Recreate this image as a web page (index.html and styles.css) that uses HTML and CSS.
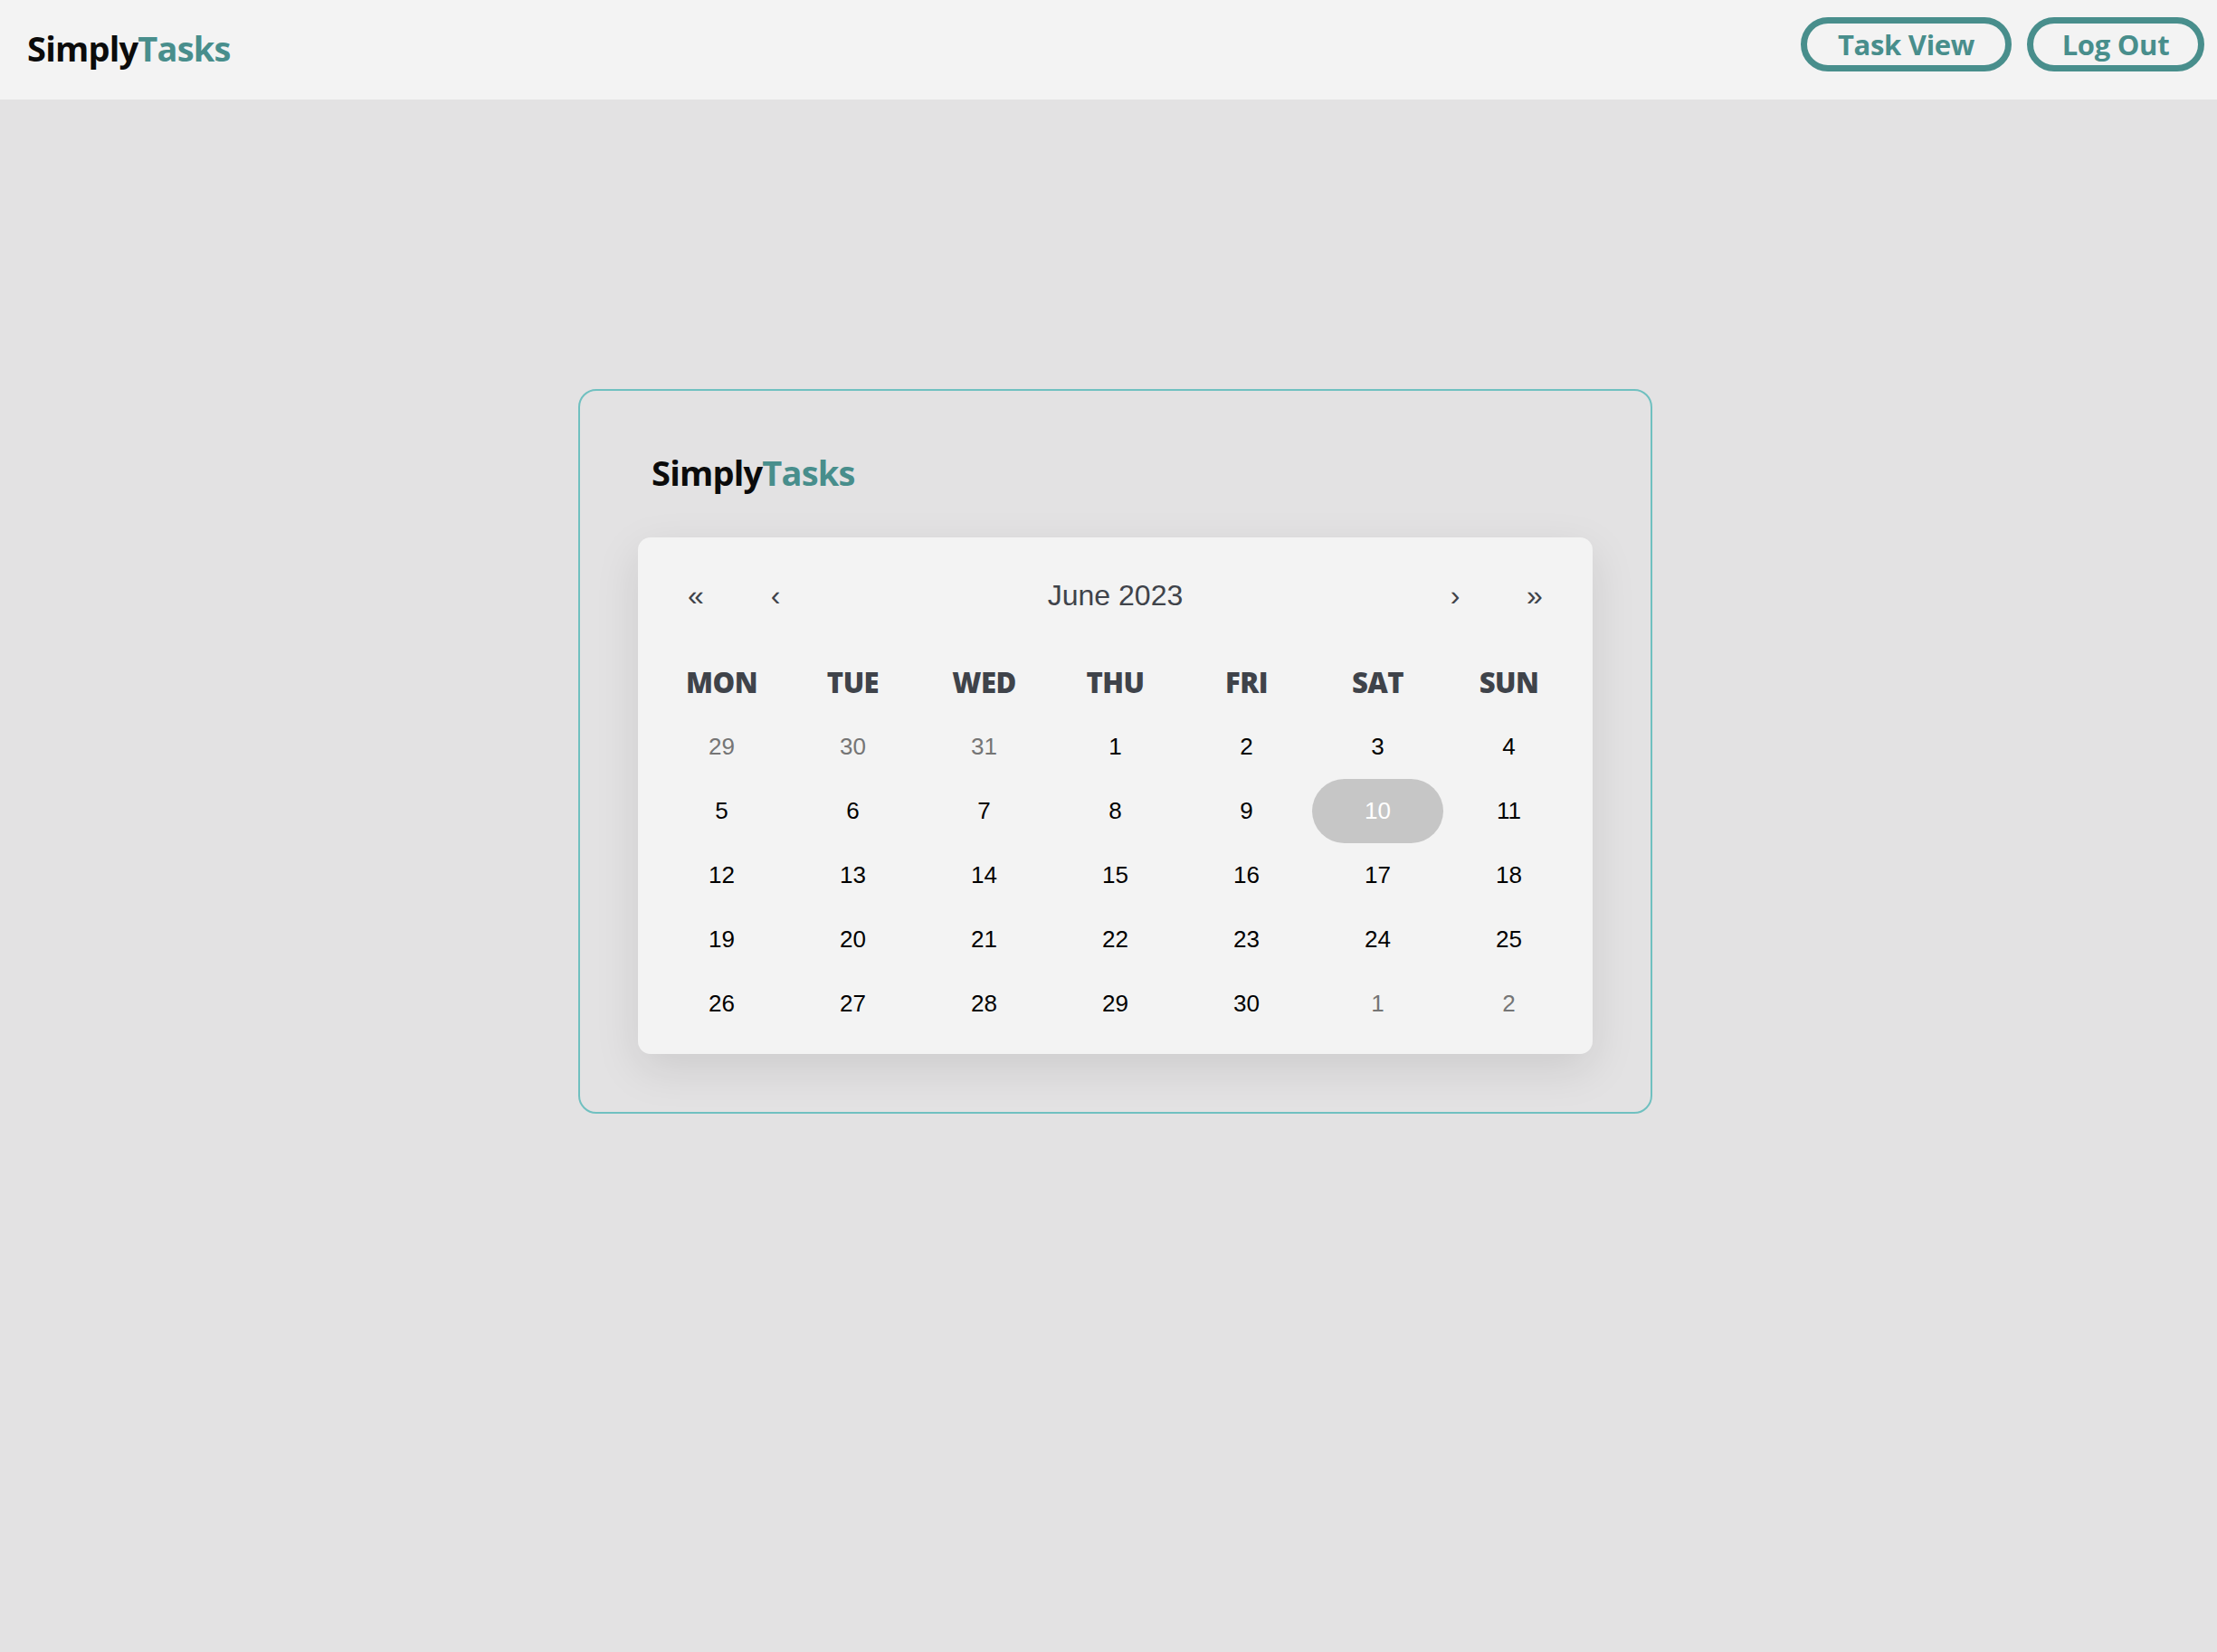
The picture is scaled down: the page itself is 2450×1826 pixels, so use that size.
FILE: index.html
```html
<!DOCTYPE html>
<html lang="en">
<head>
<meta charset="utf-8">
<title>SimplyTasks</title>
<link rel="stylesheet" href="styles.css">
</head>
<body>
<header class="topbar">
  <div class="logo logo-top"><span class="logo-a">Simply</span><span class="logo-b">Tasks</span></div>
  <nav class="actions">
    <button class="pill-btn btn-task">Task View</button>
    <button class="pill-btn btn-logout">Log Out</button>
  </nav>
</header>
<main class="main">
  <section class="card">
    <div class="logo logo-card"><span class="logo-a">Simply</span><span class="logo-b">Tasks</span></div>
    <div class="calendar">
      <div class="cal-nav">
        <button class="nav-btn">«</button>
        <button class="nav-btn">‹</button>
        <div class="nav-label">June 2023</div>
        <button class="nav-btn">›</button>
        <button class="nav-btn">»</button>
      </div>
      <div class="weekdays">
        <div class="wd">Mon</div><div class="wd">Tue</div><div class="wd">Wed</div><div class="wd">Thu</div><div class="wd">Fri</div><div class="wd">Sat</div><div class="wd">Sun</div>
      </div>
      <div class="days">
        <div class="day other">29</div><div class="day other">30</div><div class="day other">31</div><div class="day">1</div><div class="day">2</div><div class="day">3</div><div class="day">4</div>
        <div class="day">5</div><div class="day">6</div><div class="day">7</div><div class="day">8</div><div class="day">9</div><div class="day active">10</div><div class="day">11</div>
        <div class="day">12</div><div class="day">13</div><div class="day">14</div><div class="day">15</div><div class="day">16</div><div class="day">17</div><div class="day">18</div>
        <div class="day">19</div><div class="day">20</div><div class="day">21</div><div class="day">22</div><div class="day">23</div><div class="day">24</div><div class="day">25</div>
        <div class="day">26</div><div class="day">27</div><div class="day">28</div><div class="day">29</div><div class="day">30</div><div class="day other">1</div><div class="day other">2</div>
      </div>
    </div>
  </section>
</main>
</body>
</html>
```
FILE: styles.css
```css
* { box-sizing: border-box; }
html, body { margin: 0; padding: 0; }
body {
  background: #e3e2e3;
  min-height: 1826px;
  font-family: "Liberation Sans", Arial, sans-serif;
}
.topbar {
  height: 110px;
  background: #f3f3f3;
  display: flex;
  align-items: center;
  justify-content: space-between;
  padding: 0 14px 0 30px;
}
.logo {
  font-family: "Open Sans", "Noto Sans", sans-serif;
  font-weight: 700;
  font-size: 38px;
  line-height: 52px;
  letter-spacing: -0.8px;
}
.logo-a { color: #0b0b0b; }
.logo-b { color: #488e8c; }
.logo-top { margin-bottom: 4px; }
.actions {
  display: flex;
  gap: 17px;
  margin-bottom: 12px;
}
.pill-btn {
  height: 60px;
  padding: 0;
  border: 7px solid #488e8c;
  border-radius: 30px;
  background: transparent;
  color: #488e8c;
  font-family: "Open Sans", "Noto Sans", sans-serif;
  font-weight: 700;
  font-size: 31px;
  line-height: 1;
  letter-spacing: -0.3px;
  text-align: center;
  cursor: pointer;
}
.btn-task { width: 233px; }
.btn-logout { width: 196px; }
.main {
  display: flex;
  justify-content: center;
  padding: 320px 0 0 15px;
}
.card {
  width: 1187px;
  border: 2px solid #70c0c0;
  border-radius: 20px;
  padding: 64px;
}
.logo-card {
  margin-bottom: 46px;
  padding-left: 15px;
}
.calendar {
  background: #f3f3f3;
  border-radius: 14px;
  padding: 20px;
  box-shadow: 0 16px 50px rgba(0, 0, 0, 0.10);
}
.cal-nav {
  display: flex;
  height: 88px;
  margin-bottom: 16px;
}
.nav-btn {
  width: 88px;
  border: 0;
  background: transparent;
  color: #3f434a;
  font-family: "Liberation Sans", Arial, sans-serif;
  font-size: 32px;
  padding: 0;
}
.nav-label {
  flex: 1;
  display: flex;
  align-items: center;
  justify-content: center;
  color: #3f434a;
  font-size: 32px;
}
.weekdays {
  display: grid;
  grid-template-columns: repeat(7, 1fr);
  height: 71px;
  align-items: center;
}
.wd {
  text-align: center;
  text-transform: uppercase;
  font-family: "Open Sans", "Noto Sans", sans-serif;
  font-weight: 800;
  font-size: 31px;
  color: #3f434a;
  letter-spacing: -0.5px;
}
.days {
  display: grid;
  grid-template-columns: repeat(7, 1fr);
  grid-auto-rows: 71px;
  padding-top: 1px;
}
.day {
  display: flex;
  align-items: center;
  justify-content: center;
  font-size: 26px;
  color: #000;
}
.day.other { color: #757575; }
.day.active {
  background: #c6c6c6;
  color: #fff;
  border-radius: 36px;
}
```
